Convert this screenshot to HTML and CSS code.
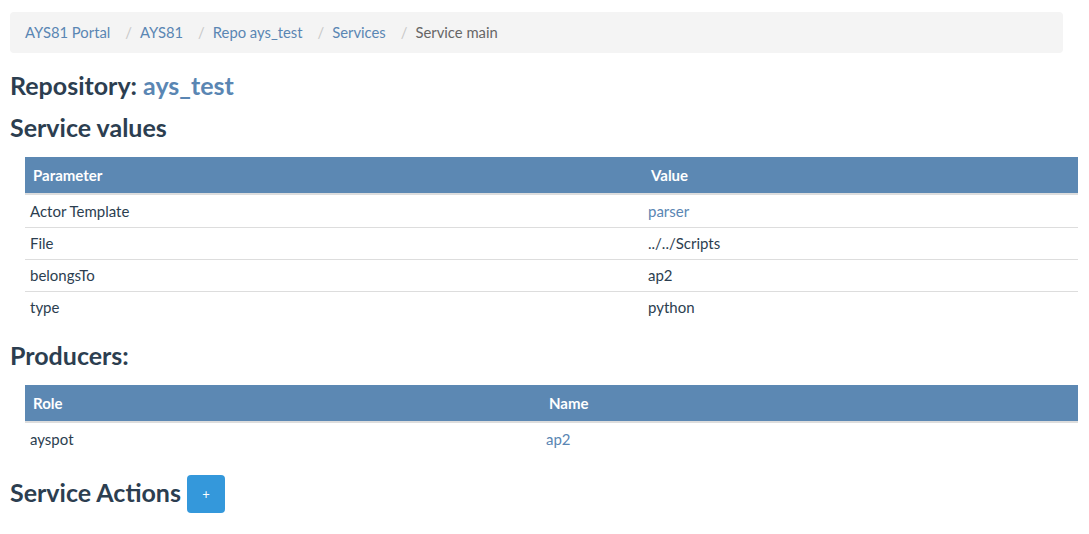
FILE: index.html
```html
<!DOCTYPE html>
<html>
<head>
<meta charset="utf-8">
<link rel="stylesheet" href="styles.css">
</head>
<body>
<div class="page">
  <ol class="breadcrumb">
    <li><a href="#">AYS81 Portal</a></li>
    <li><a href="#">AYS81</a></li>
    <li><a href="#">Repo ays_test</a></li>
    <li><a href="#">Services</a></li>
    <li class="active">Service main</li>
  </ol>

  <h3 class="title">Repository: <a href="#">ays_test</a></h3>
  <h3 class="section">Service values</h3>
  <table class="grid">
    <thead>
      <tr><th class="col-param">Parameter</th><th>Value</th></tr>
    </thead>
    <tbody>
      <tr><td>Actor Template</td><td><a href="#">parser</a></td></tr>
      <tr><td>File</td><td>../../Scripts</td></tr>
      <tr><td>belongsTo</td><td>ap2</td></tr>
      <tr><td>type</td><td>python</td></tr>
    </tbody>
  </table>

  <h3 class="section producers">Producers:</h3>
  <table class="grid">
    <thead>
      <tr><th class="col-role">Role</th><th>Name</th></tr>
    </thead>
    <tbody>
      <tr><td>ayspot</td><td><a href="#">ap2</a></td></tr>
    </tbody>
  </table>

  <div class="actions">
    <h3 class="section">Service Actions</h3>
    <button class="btn-add">+</button>
  </div>
</div>
</body>
</html>
```
FILE: styles.css
```css
html, body {
  margin: 0;
  padding: 0;
  background: #fff;
}
body {
  font-family: Lato, "Open Sans", sans-serif;
  font-size: 15px;
  color: #2c3e50;
}
a {
  color: #5a86b3;
  text-decoration: none;
}
.page {
  width: 1053px;
  padding: 12px 10px 0 10px;
}
.breadcrumb {
  display: flex;
  list-style: none;
  margin: 0;
  padding: 0 15px 2px 15px;
  height: 39px;
  align-items: center;
  background: #f4f4f4;
  border-radius: 4px;
  line-height: 20px;
  font-size: 14.8px;
}
.breadcrumb li + li::before {
  content: "/";
  color: #c8c8c8;
  padding: 0 8px 0 15px;
}
.breadcrumb .active {
  color: #666;
}
h3 {
  margin: 0;
  font-weight: 700;
  font-size: 25px;
  line-height: 30px;
}
.title {
  margin-top: 17px;
}
.section {
  margin-top: 12px;
}
.grid {
  border-collapse: collapse;
  margin-left: 15px;
  width: 1053px;
  margin-top: 15px;
}
.grid th {
  background: #5c88b3;
  color: #fff;
  font-weight: 700;
  text-align: left;
  height: 36px;
  padding: 0 8px;
  border-bottom: 2px solid #dddddd;
}
.grid td {
  height: 30px;
  padding: 0 5px 1px 5px;
  border-top: 1px solid #dddddd;
}
.grid tbody tr:first-child td {
  border-top: none;
  height: 32px;
  padding-bottom: 0;
}
.col-param {
  width: 602px;
}
.col-role {
  width: 500px;
}
.producers {
  margin-top: 17px;
}
.actions {
  display: flex;
  align-items: flex-start;
  gap: 6px;
  margin-top: 20px;
}
.actions .section {
  margin-top: 2px;
}
.btn-add {
  width: 38px;
  height: 38px;
  border: none;
  border-radius: 4px;
  background: #3498db;
  color: #fff;
  font-family: Lato, sans-serif;
  font-size: 13px;
  padding: 0;
}
```
